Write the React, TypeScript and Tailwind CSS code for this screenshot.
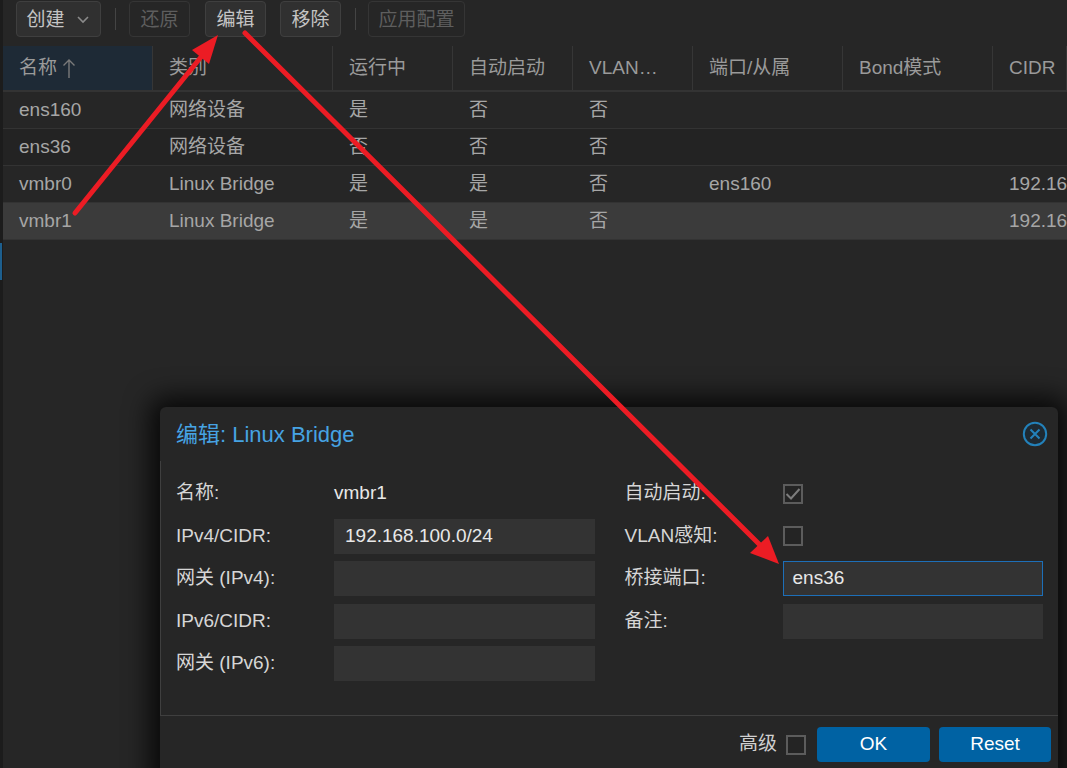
import React from "react";

const cols = ["名称", "类别", "运行中", "自动启动", "VLAN…", "端口/从属", "Bond模式", "CIDR"];

const rows = [
  ["ens160", "网络设备", "是", "否", "否", "", "", ""],
  ["ens36", "网络设备", "否", "否", "否", "", "", ""],
  ["vmbr0", "Linux Bridge", "是", "是", "否", "ens160", "", "192.168.1.10/24"],
  ["vmbr1", "Linux Bridge", "是", "是", "否", "", "", "192.168.100.0/24"],
];

function Checkbox({ checked }: { checked?: boolean }) {
  return (
    <div className="w-[20px] h-[20px] border-2 border-[#5c5c5c] bg-[#242424] flex items-center justify-center">
      {checked && (
        <svg width="16" height="16" viewBox="0 0 16 16">
          <path d="M1.5 8 L6 12.5 L14.5 3" fill="none" stroke="#7c7c7c" strokeWidth="2" />
        </svg>
      )}
    </div>
  );
}

function ToolButton({ label, disabled, chevron }: { label: string; disabled?: boolean; chevron?: boolean }) {
  return (
    <div
      className={
        "h-[36px] rounded-[4px] border flex items-center justify-center text-[19px] leading-none " +
        (disabled
          ? "border-[#353535] bg-[#262626] text-[#5e5e5e]"
          : "border-[#3f3f3f] bg-[#303030] text-[#c4c4c4]")
      }
    >
      {label}
      {chevron && (
        <svg width="16" height="16" viewBox="0 0 16 16" className="ml-[10px]">
          <path d="M3 6 L8 11 L13 6" fill="none" stroke="#8a8a8a" strokeWidth="1.6" />
        </svg>
      )}
    </div>
  );
}

function FormRow({ label, children }: { label: string; children?: React.ReactNode }) {
  return (
    <div className="h-[35px] flex items-center">
      <div className="w-[158px] text-[19px] text-[#d6d6d6] shrink-0">{label}</div>
      <div className="flex-1 h-full flex items-center">{children}</div>
    </div>
  );
}

function Field({ value, focused }: { value?: string; focused?: boolean }) {
  return (
    <div
      className={
        "w-full h-full bg-[#333333] flex items-center text-[19px] text-[#e8e8e8] " +
        (focused ? "border border-[#1d6fb8] pl-[9px]" : "pl-[11px]")
      }
    >
      {value}
    </div>
  );
}

export default function App() {
  return (
    <div className="relative w-[1067px] h-[768px] overflow-hidden bg-[#262626] flex font-['Liberation_Sans','Noto_Sans_CJK_SC',sans-serif]">
      {/* left strip */}
      <div className="w-[3px] shrink-0 bg-[#1c1c1c] flex flex-col">
        <div className="h-[243px]" />
        <div className="h-[37px] w-[2px] bg-[#1d5f8e]" />
      </div>

      <div className="flex-1 flex flex-col min-w-0">
        {/* toolbar */}
        <div className="h-[46px] shrink-0 flex items-start pt-[1px] pl-[13px]">
          <div className="w-[85px]">
            <ToolButton label="创建" chevron />
          </div>
          <div className="w-[1px] h-[22px] bg-[#444] mt-[7px] ml-[14px]" />
          <div className="w-[61px] ml-[13px]">
            <ToolButton label="还原" disabled />
          </div>
          <div className="w-[61px] ml-[15px]">
            <ToolButton label="编辑" />
          </div>
          <div className="w-[61px] ml-[14px]">
            <ToolButton label="移除" />
          </div>
          <div className="w-[1px] h-[22px] bg-[#444] mt-[7px] ml-[14px]" />
          <div className="w-[97px] ml-[12px]">
            <ToolButton label="应用配置" disabled />
          </div>
        </div>

        {/* table header */}
        <div className="h-[46px] shrink-0 grid grid-cols-[150px_180px_120px_120px_120px_150px_150px_1fr] border-b-2 border-[#333333] bg-[#262626]">
          {cols.map((c, i) => (
            <div
              key={c}
              className={
                "flex items-center pl-[16px] text-[19px] text-[#9a9a9a] whitespace-nowrap overflow-hidden border-r border-[#363636] " +
                (i === 0 ? "bg-[#1e2a36]" : "")
              }
            >
              {c}
              {i === 0 && (
                <svg width="14" height="22" viewBox="0 0 14 22" className="ml-[5px]">
                  <path d="M7 21 V3 M1.5 8.5 L7 3 L12.5 8.5" fill="none" stroke="#7a7a7a" strokeWidth="1.4" />
                </svg>
              )}
            </div>
          ))}
        </div>

        {/* rows */}
        {rows.map((r, ri) => (
          <div
            key={ri}
            className={
              "h-[37px] shrink-0 grid grid-cols-[150px_180px_120px_120px_120px_150px_150px_1fr] border-b border-[#333333] " +
              (ri === 3 ? "bg-[#3b3b3b]" : ri % 2 === 1 ? "bg-[#232323]" : "bg-[#262626]")
            }
          >
            {r.map((c, ci) => (
              <div
                key={ci}
                className="flex items-center pl-[16px] text-[19px] text-[#a6a6a6] whitespace-nowrap overflow-hidden"
              >
                {c}
              </div>
            ))}
          </div>
        ))}
        <div className="flex-1" />
      </div>

      {/* dialog */}
      <div className="absolute left-[160px] top-[407px] w-[898px] h-[372px] bg-[#262626] rounded-t-[6px] shadow-[0_0_26px_10px_rgba(0,0,0,0.78)] flex flex-col">
        <div className="h-[54px] shrink-0 flex items-center justify-between pl-[16px] pr-[10px]">
          <span className="text-[22px] text-[#46a3e3]">编辑: Linux Bridge</span>
          <svg width="26" height="26" viewBox="0 0 26 26">
            <circle cx="13" cy="13" r="11.2" fill="#1e2a33" stroke="#2381ba" strokeWidth="2" />
            <path d="M8.5 8.5 L17.5 17.5 M17.5 8.5 L8.5 17.5" stroke="#2381ba" strokeWidth="2" />
          </svg>
        </div>

        <div className="h-[255px] shrink-0 border-l border-b border-[#3f3f3f] pl-[15px] pr-[15px] pt-[15px] grid grid-cols-2 gap-x-[30px] content-start">
          <div className="flex flex-col gap-[7.5px]">
            <FormRow label="名称:">
              <span className="text-[19px] text-[#e8e8e8]">vmbr1</span>
            </FormRow>
            <FormRow label="IPv4/CIDR:">
              <Field value="192.168.100.0/24" />
            </FormRow>
            <FormRow label="网关 (IPv4):">
              <Field />
            </FormRow>
            <FormRow label="IPv6/CIDR:">
              <Field />
            </FormRow>
            <FormRow label="网关 (IPv6):">
              <Field />
            </FormRow>
          </div>
          <div className="flex flex-col gap-[7.5px]">
            <FormRow label="自动启动:">
              <Checkbox checked />
            </FormRow>
            <FormRow label="VLAN感知:">
              <Checkbox />
            </FormRow>
            <FormRow label="桥接端口:">
              <Field value="ens36" focused />
            </FormRow>
            <FormRow label="备注:">
              <Field />
            </FormRow>
          </div>
        </div>

        <div className="flex-1 flex items-start justify-end pt-[11px] pr-[7px]">
          <div className="h-[35px] flex items-center text-[19px] text-[#d0d0d0]">高级</div>
          <div className="h-[35px] flex items-center ml-[9px]">
            <Checkbox />
          </div>
          <div className="ml-[11px] w-[113px] h-[35px] rounded-[4px] bg-[#0062a3] flex items-center justify-center text-[19px] text-white">
            OK
          </div>
          <div className="ml-[9px] w-[112px] h-[35px] rounded-[4px] bg-[#0062a3] flex items-center justify-center text-[19px] text-white">
            Reset
          </div>
        </div>
      </div>

      {/* annotation arrows */}
      <svg className="absolute left-0 top-0 pointer-events-none" width="1067" height="768" viewBox="0 0 1067 768">
        <line x1="75" y1="213" x2="201" y2="57" stroke="#ec1c24" strokeWidth="5" strokeLinecap="round" />
        <polygon points="218,35 209,64 192,50" fill="#ec1c24" />
        <line x1="245" y1="33" x2="760" y2="545" stroke="#ec1c24" strokeWidth="5" strokeLinecap="round" />
        <polygon points="779,564 750,553 768,536" fill="#ec1c24" />
      </svg>
    </div>
  );
}
